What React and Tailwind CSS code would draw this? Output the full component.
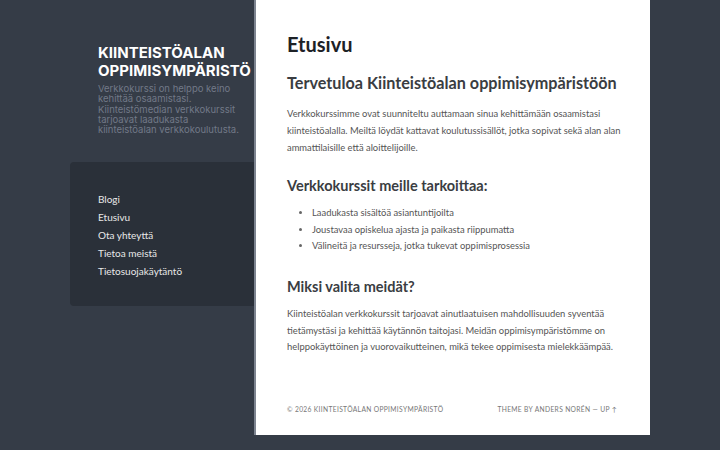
export default function App() {
  const lato = { fontFamily: 'Lato, "Noto Sans", sans-serif' };
  const sans = { fontFamily: 'Inter, "Open Sans", sans-serif' };
  return (
    <div className="w-[720px] h-[450px] bg-[#353c47] flex overflow-hidden" style={lato}>
      <aside className="w-[256px] shrink-0 flex flex-col">
        <div className="pl-[98px] pt-[44px] pr-[4px]">
          <h1 className="text-[15px] leading-[18px] font-bold text-white uppercase whitespace-nowrap" style={sans}>
            Kiinteistöalan<br />oppimisympäristö
          </h1>
          <p className="mt-[4px] text-[9.5px] leading-[10.3px] text-[#727987] w-[150px]" style={sans}>
            Verkkokurssi on helppo keino kehittää osaamistasi. Kiinteistömedian verkkokurssit tarjoavat laadukasta kiinteistöalan verkkokoulutusta.
          </p>
        </div>
        <nav className="ml-[70px] mt-[27px] h-[144px] bg-[#2a3039] rounded-l-[4px] pl-[28px] pt-[28px]">
          <ul className="flex flex-col text-[10px] leading-[18px] text-[#e8e8e8]">
            <li>Blogi</li>
            <li>Etusivu</li>
            <li>Ota yhteyttä</li>
            <li>Tietoa meistä</li>
            <li>Tietosuojakäytäntö</li>
          </ul>
        </nav>
      </aside>
      <main className="w-[394px] h-[435px] bg-white shadow-[-2px_0_0_#7d8490] flex flex-col pl-[31px] pr-[28px]">
        <h1 className="mt-[31px] text-[20px] leading-[26px] font-bold text-[#1d2126]">Etusivu</h1>
        <h2 className="mt-[14px] text-[16.2px] leading-[24px] font-bold text-[#3a3d42] whitespace-nowrap">Tervetuloa Kiinteistöalan oppimisympäristöön</h2>
        <p className="mt-[9.5px] text-[9.4px] leading-[17px] text-[#555]">
          Verkkokurssimme ovat suunniteltu auttamaan sinua kehittämään osaamistasi kiinteistöalalla. Meiltä löydät kattavat koulutussisällöt, jotka sopivat sekä alan alan ammattilaisille että aloittelijoille.
        </p>
        <h3 className="mt-[20.5px] text-[14.5px] leading-[20px] font-bold text-[#3a3d42]">Verkkokurssit meille tarkoittaa:</h3>
        <ul className="mt-[9px] list-disc pl-[25px] text-[9.4px] leading-[16.5px] text-[#555] marker:text-[#666]">
          <li>Laadukasta sisältöä asiantuntijoilta</li>
          <li>Joustavaa opiskelua ajasta ja paikasta riippumatta</li>
          <li>Välineitä ja resursseja, jotka tukevat oppimisprosessia</li>
        </ul>
        <h3 className="mt-[22px] text-[14.5px] leading-[20px] font-bold text-[#3a3d42]">Miksi valita meidät?</h3>
        <p className="mt-[9.5px] text-[9.4px] leading-[16.7px] text-[#555]">
          Kiinteistöalan verkkokurssit tarjoavat ainutlaatuisen mahdollisuuden syventää tietämystäsi ja kehittää käytännön taitojasi. Meidän oppimisympäristömme on helppokäyttöinen ja vuorovaikutteinen, mikä tekee oppimisesta mielekkäämpää.
        </p>
        <div className="mt-auto mb-[21px] flex justify-between text-[6.7px] tracking-[0.05em] uppercase text-[#777]">
          <span>© 2026 Kiinteistöalan oppimisympäristö</span>
          <span className="mr-[5px]">Theme by Anders Norén — Up ↑</span>
        </div>
      </main>
    </div>
  );
}
